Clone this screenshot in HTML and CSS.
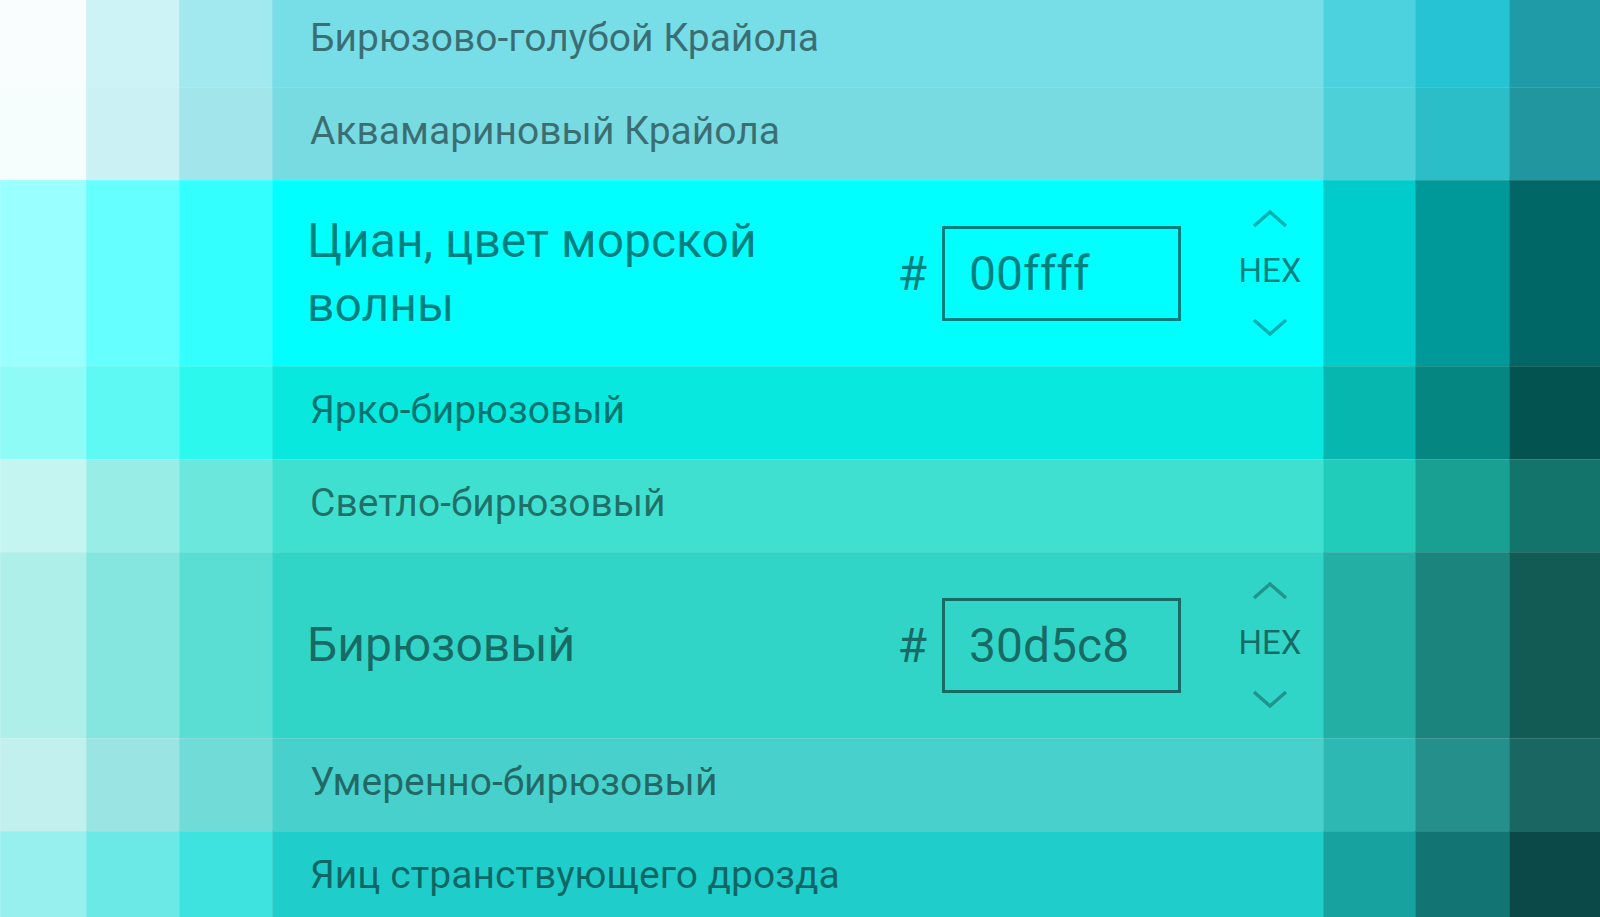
FILE: index.html
```html
<!DOCTYPE html>
<html lang="ru">
    <head>
        <meta charset="UTF-8" />
        <meta name="viewport" content="width=device-width, initial-scale=1.0" />
        <title>Оттенки бирюзового</title>
        <link rel="stylesheet" href="styles.css">
    </head>
    <body>
        <div class="palette">
            <div class="row turquoise-blue">
                <div class="cell tint-3"></div>
                <div class="cell tint-2"></div>
                <div class="cell tint-1"></div>
                <div class="cell main"><span class="name">Бирюзово-голубой Крайола</span></div>
                <div class="cell shade-1"></div>
                <div class="cell shade-2"></div>
                <div class="cell shade-3"></div>
            </div>

            <div class="row aquamarine">
                <div class="cell tint-3"></div>
                <div class="cell tint-2"></div>
                <div class="cell tint-1"></div>
                <div class="cell main"><span class="name">Аквамариновый Крайола</span></div>
                <div class="cell shade-1"></div>
                <div class="cell shade-2"></div>
                <div class="cell shade-3"></div>
            </div>

            <div class="row cyan open">
                <div class="cell tint-3"></div>
                <div class="cell tint-2"></div>
                <div class="cell tint-1"></div>
                <div class="cell main">
                    <span class="name">Циан, цвет морской волны</span>
                    <span class="hash">#</span>
                    <div class="hex-box">00ffff</div>
                    <div class="format">
                        <svg class="chevron" width="36" height="18" viewBox="0 0 36 18"><polyline points="2,16 18,2 34,16" /></svg>
                        <span class="format-label">HEX</span>
                        <svg class="chevron" width="36" height="18" viewBox="0 0 36 18"><polyline points="2,2 18,16 34,2" /></svg>
                    </div>
                </div>
                <div class="cell shade-1"></div>
                <div class="cell shade-2"></div>
                <div class="cell shade-3"></div>
            </div>

            <div class="row bright-turquoise">
                <div class="cell tint-3"></div>
                <div class="cell tint-2"></div>
                <div class="cell tint-1"></div>
                <div class="cell main"><span class="name">Ярко-бирюзовый</span></div>
                <div class="cell shade-1"></div>
                <div class="cell shade-2"></div>
                <div class="cell shade-3"></div>
            </div>

            <div class="row light-turquoise">
                <div class="cell tint-3"></div>
                <div class="cell tint-2"></div>
                <div class="cell tint-1"></div>
                <div class="cell main"><span class="name">Светло-бирюзовый</span></div>
                <div class="cell shade-1"></div>
                <div class="cell shade-2"></div>
                <div class="cell shade-3"></div>
            </div>

            <div class="row turquoise open">
                <div class="cell tint-3"></div>
                <div class="cell tint-2"></div>
                <div class="cell tint-1"></div>
                <div class="cell main">
                    <span class="name">Бирюзовый</span>
                    <span class="hash">#</span>
                    <div class="hex-box">30d5c8</div>
                    <div class="format">
                        <svg class="chevron" width="36" height="18" viewBox="0 0 36 18"><polyline points="2,16 18,2 34,16" /></svg>
                        <span class="format-label">HEX</span>
                        <svg class="chevron" width="36" height="18" viewBox="0 0 36 18"><polyline points="2,2 18,16 34,2" /></svg>
                    </div>
                </div>
                <div class="cell shade-1"></div>
                <div class="cell shade-2"></div>
                <div class="cell shade-3"></div>
            </div>

            <div class="row medium-turquoise">
                <div class="cell tint-3"></div>
                <div class="cell tint-2"></div>
                <div class="cell tint-1"></div>
                <div class="cell main"><span class="name">Умеренно-бирюзовый</span></div>
                <div class="cell shade-1"></div>
                <div class="cell shade-2"></div>
                <div class="cell shade-3"></div>
            </div>

            <div class="row robin-egg">
                <div class="cell tint-3"></div>
                <div class="cell tint-2"></div>
                <div class="cell tint-1"></div>
                <div class="cell main"><span class="name">Яиц странствующего дрозда</span></div>
                <div class="cell shade-1"></div>
                <div class="cell shade-2"></div>
                <div class="cell shade-3"></div>
            </div>
        </div>
    </body>
</html>
```

FILE: styles.css
```css
html, body {
    margin: 0;
    height: 100%;
    overflow: hidden;
    background-color: white;
    font-family: Roboto, "Noto Sans", sans-serif;
}

/* page is scrolled a little, first row is cut at the top */
.palette {
    margin-top: -6px;
}

/* base colours as hsl, tints and shades step the lightness by 10% */
.turquoise-blue    { --h: 185.4; --s: 70%;   --l: 68.6%; }
.aquamarine        { --h: 184;   --s: 64.6%; --l: 67.8%; }
.cyan              { --h: 180;   --s: 100%;  --l: 50%; }
.bright-turquoise  { --h: 177.3; --s: 93.3%; --l: 47.1%; }
.light-turquoise   { --h: 174;   --s: 72.1%; --l: 56.5%; }
.turquoise         { --h: 175.3; --s: 66.3%; --l: 51.2%; }
.medium-turquoise  { --h: 177.8; --s: 59.8%; --l: 55.1%; }
.robin-egg         { --h: 179;   --s: 73.8%; --l: 46.5%; }

.row {
    display: grid;
    grid-template-columns: 86px 93px 93px 1fr 92px 94px 91px;
    height: 93px;
}

.row.open {
    height: 186px;
}

.cell {
    box-shadow: inset 1px 1px 0 rgba(255, 255, 255, 0.13);
}

.tint-3  { background-color: hsl(var(--h), var(--s), calc(var(--l) + 30%)); }
.tint-2  { background-color: hsl(var(--h), var(--s), calc(var(--l) + 20%)); }
.tint-1  { background-color: hsl(var(--h), var(--s), calc(var(--l) + 10%)); }
.main    { background-color: hsl(var(--h), var(--s), var(--l)); }
.shade-1 { background-color: hsl(var(--h), var(--s), calc(var(--l) - 10%)); }
.shade-2 { background-color: hsl(var(--h), var(--s), calc(var(--l) - 20%)); }
.shade-3 { background-color: hsl(var(--h), var(--s), calc(var(--l) - 30%)); }

.main {
    display: flex;
    align-items: center;
    padding: 0 8px 0 38px;
    color: rgba(0, 0, 0, 0.5);
}

.name {
    font-size: 39px;
    margin-bottom: 6px;
}

.open .name {
    width: 480px;
    margin-left: -3px;
    margin-bottom: 0;
    font-size: 48px;
    line-height: 64px;
}

.hash {
    margin-left: auto;
    margin-right: 15px;
    font-size: 48px;
}

.hex-box {
    display: flex;
    align-items: center;
    box-sizing: border-box;
    width: 239px;
    height: 95px;
    padding-left: 24px;
    border: 3px solid rgba(0, 0, 0, 0.5);
    font-size: 48px;
}

.format {
    display: flex;
    flex-direction: column;
    align-items: center;
    width: 90px;
    margin-left: 44px;
}

.format-label {
    margin: 23px 0 27px;
    font-size: 33px;
    line-height: 40px;
}

.chevron polyline {
    fill: none;
    stroke: rgba(0, 0, 0, 0.3);
    stroke-width: 3.5;
}
```
